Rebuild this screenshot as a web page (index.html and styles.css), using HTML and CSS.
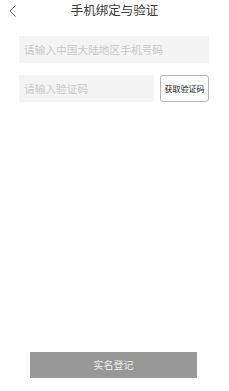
FILE: index.html
```html
<!DOCTYPE html>
<html lang="zh">
<head>
<meta charset="utf-8">
<link rel="stylesheet" href="styles.css">
</head>
<body>
<div class="page">
  <header class="header">
    <svg class="back" width="8" height="12" viewBox="0 0 8 12"><path d="M6.5 0.5 L1 6 L6.5 11.5" fill="none" stroke="#555" stroke-width="0.9"/></svg>
    <div class="title">手机绑定与验证</div>
  </header>
  <div class="form">
    <div class="field">请输入中国大陆地区手机号码</div>
    <div class="row">
      <div class="field code">请输入验证码</div>
      <div class="get-code">获取验证码</div>
    </div>
  </div>
  <div class="submit">实名登记</div>
</div>
</body>
</html>
```
FILE: styles.css
```css
html, body { margin: 0; padding: 0; background: #fff; }
body { font-family: "Noto Sans CJK SC", "Noto Sans", sans-serif; }
.page { display: flex; flex-direction: column; height: 391px; }
.header { position: relative; height: 20px; display: flex; align-items: center; justify-content: center; }
.back { position: absolute; left: 9px; top: 5px; }
.title { font-size: 12.5px; color: #3a3a3a; line-height: 20px; }
.form { padding: 16px 20px 0 19px; display: flex; flex-direction: column; gap: 12px; }
.field { height: 27px; background: #f4f4f4; color: #c8c8c8; font-size: 10.7px; line-height: 27px; padding-left: 5px; }
.row { display: flex; gap: 6px; }
.code { width: 130px; }
.get-code { flex: 1; height: 25px; border: 1px solid #b5b5b5; border-radius: 3px; font-size: 8px; line-height: 25px; text-align: center; color: #111; }
.submit { margin: auto 32px 13px 30px; height: 26px; background: #989898; color: #eee; font-size: 10px; line-height: 26px; text-align: center; }
```
